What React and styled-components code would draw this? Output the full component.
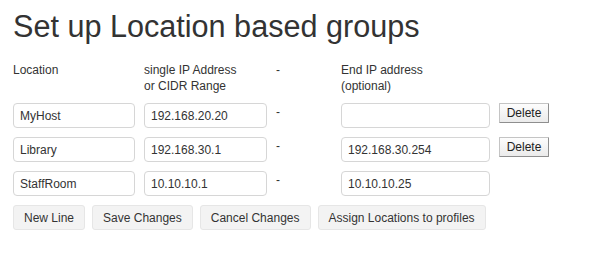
import React from "react";
import styled, { createGlobalStyle } from "styled-components";

const Global = createGlobalStyle`
  html, body { margin: 0; padding: 0; background: #fff; }
  body { font-family: "Liberation Sans", Arial, Helvetica, sans-serif; color: #333; }
`;

const Page = styled.div`
  padding: 8px 13px 0;
  display: flex;
  flex-direction: column;
`;

const Title = styled.h1`
  margin: 0;
  font-size: 30.6px;
  line-height: 36px;
  font-weight: normal;
  color: #333;
`;

const Grid = styled.div`
  display: grid;
  grid-template-columns: 122px 123px 56px 149px 50px;
  column-gap: 9px;
  align-items: start;
  margin-top: ${(p) => p.$mt || 0}px;
`;

const Head = styled.div`
  font-size: 12px;
  line-height: 16px;
  color: #333;
`;

const Field = styled.input`
  box-sizing: border-box;
  width: 100%;
  height: 25px;
  margin: 0;
  padding: 0 6px;
  border: 1px solid #d6d6d6;
  border-radius: 4px;
  font-family: "Liberation Sans", Arial, sans-serif;
  font-size: 12px;
  color: #333;
  background: #fff;
  outline: none;
`;

const Dash = styled.div`
  font-size: 12px;
  line-height: 16px;
  padding-top: 1px;
  color: #333;
`;

const DeleteBtn = styled.button`
  box-sizing: border-box;
  width: 50px;
  height: 20px;
  margin: 0;
  padding: 0;
  font-family: "Liberation Sans", Arial, sans-serif;
  font-size: 12px;
  color: #222;
  background: linear-gradient(#fdfdfd, #ebebeb);
  border: 1px solid #c4c4c4;
  border-right-color: #8e8e8e;
  border-bottom-color: #8e8e8e;
  border-radius: 1px;
`;

const Actions = styled.div`
  display: flex;
  gap: 7px;
  margin-top: 9px;
`;

const ActionBtn = styled.button`
  box-sizing: border-box;
  height: 25px;
  margin: 0;
  padding: 0 10px;
  font-family: "Liberation Sans", Arial, sans-serif;
  font-size: 12px;
  color: #333;
  background: #f3f3f3;
  border: 1px solid #e6e6e6;
  border-radius: 3px;
`;

const rows = [
  { loc: "MyHost", start: "192.168.20.20", end: "", del: true },
  { loc: "Library", start: "192.168.30.1", end: "192.168.30.254", del: true },
  { loc: "StaffRoom", start: "10.10.10.1", end: "10.10.10.25", del: false },
];

export default function App() {
  return (
    <Page>
      <Global />
      <Title>Set up Location based groups</Title>
      <Grid $mt={18}>
        <Head>Location</Head>
        <Head>
          single IP Address
          <br />
          or CIDR Range
        </Head>
        <Head>-</Head>
        <Head>
          End IP address
          <br />
          (optional)
        </Head>
        <div />
      </Grid>
      {rows.map((r, i) => (
        <Grid key={i} $mt={9}>
          <Field defaultValue={r.loc} />
          <Field defaultValue={r.start} />
          <Dash>-</Dash>
          <Field defaultValue={r.end} />
          {r.del ? <DeleteBtn>Delete</DeleteBtn> : <div />}
        </Grid>
      ))}
      <Actions>
        <ActionBtn>New Line</ActionBtn>
        <ActionBtn>Save Changes</ActionBtn>
        <ActionBtn>Cancel Changes</ActionBtn>
        <ActionBtn>Assign Locations to profiles</ActionBtn>
      </Actions>
    </Page>
  );
}
